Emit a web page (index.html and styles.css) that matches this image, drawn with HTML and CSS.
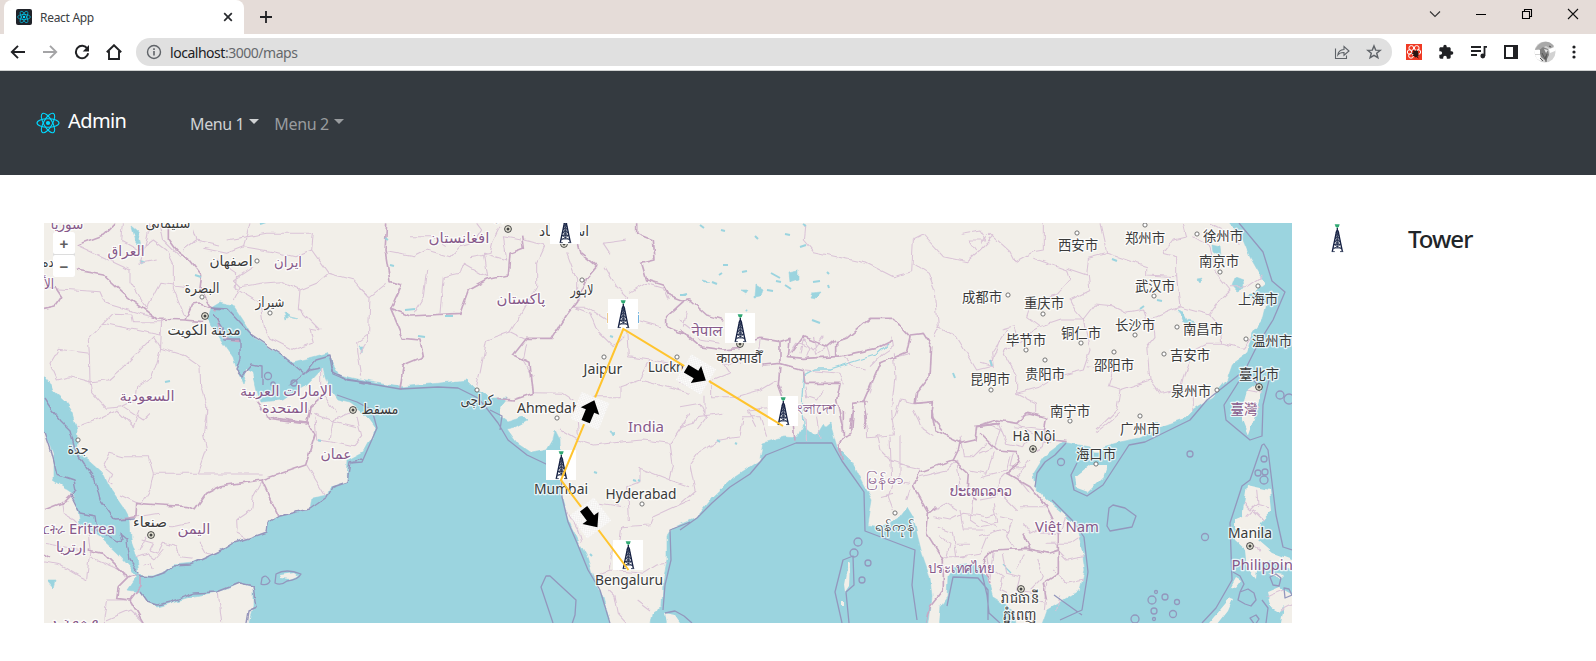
FILE: index.html
```html
<!DOCTYPE html>
<html lang="en">
<head>
<meta charset="utf-8">
<title>React App</title>
<link rel="stylesheet" href="styles.css">
</head>
<body>
<svg class="defs" width="0" height="0" aria-hidden="true">
  <defs>
    <symbol id="react" viewBox="-12 -11 24 22">
      <circle r="2.1" fill="#00d8ff"/>
      <g fill="none" stroke="#00d8ff" stroke-width="1.1">
        <ellipse rx="11" ry="4.3"/>
        <ellipse rx="11" ry="4.3" transform="rotate(60)"/>
        <ellipse rx="11" ry="4.3" transform="rotate(120)"/>
      </g>
    </symbol>
    <symbol id="tower" viewBox="0 0 30 30">
      <path d="M12.7 1.2h5l-.8 2.5-1.6 1.3-1.7-1.3z" fill="#31a873"/>
      <path d="M15.3 5v3M14.7 7.500 10.300 28.500M16 7.500 20.400 28.500" stroke="#141f42" stroke-width="1.300" fill="none"/>
      <path d="M14.200 9h2.300M13.600 12h3.500M13 15h4.700M12.400 18h5.900M11.800 21.500h7M11 25h8.600M14 9.500l3 3-3.800 3 4.700 3-5.600 3.200 7 4M16.800 9.500l-3 3 3.800 3-4.700 3 5.600 3.200-7 4M9.600 28.600h3.200M18 28.600h3.300M15.300 8v17" stroke="#1b2748" stroke-width=".8" fill="none"/>
    </symbol>
    <symbol id="marker" viewBox="0 0 30 30"><rect width="30" height="30" fill="#fff"/><use href="#tower" width="30" height="30"/></symbol>
    <pattern id="checks" width="3" height="3" patternUnits="userSpaceOnUse"><rect width="3" height="3" fill="#fff"/><path d="M0 0h1.500v1.500h-1.500zM1.500 1.500h1.500v1.500h-1.500z" fill="#eeecea"/></pattern>
    <g id="arrow"><rect x="-14.500" y="-15" width="29" height="30" fill="url(#checks)"/><path d="M-11.500-4.500H0V-10L11.500 0 0 10V4.500H-11.500z"/></g>
    <g id="town"><circle r="2.100" fill="#fff" stroke="#666" stroke-width=".9"/></g>
    <g id="capital"><circle r="3.400" fill="#e9e7d8" stroke="#444" stroke-width="1"/><circle r="1.500" fill="#444"/></g>
    <filter id="rough" filterUnits="userSpaceOnUse" x="30" y="210" width="1280" height="430" color-interpolation-filters="sRGB">
      <feTurbulence type="fractalNoise" baseFrequency=".12" numOctaves="1" seed="4"/>
      <feDisplacementMap in="SourceGraphic" scale="6" xChannelSelector="R" yChannelSelector="G"/>
    </filter>
  </defs>
</svg>

<header class="tabs">
  <div class="tab">
    <svg class="favicon" viewBox="0 0 16 16"><rect width="16" height="16" rx="2" fill="#20232a"/><use href="#react" x="1" y="1.500" width="14" height="13"/></svg>
    <span class="tab-title">React App</span>
    <svg width="10" height="10" viewBox="0 0 10 10"><path d="M1.200 1.200l7.600 7.600M8.800 1.200L1.200 8.800" stroke="#27292d" stroke-width="1.700"/></svg>
  </div>
  <svg class="plus" width="12" height="12" viewBox="0 0 12 12"><path d="M6 0v12M0 6h12" stroke="#202124" stroke-width="1.800"/></svg>
  <div class="window-buttons">
    <svg width="12" height="12" viewBox="0 0 12 12"><path d="M1 3.500l5 5 5-5" fill="none" stroke="#333" stroke-width="1.100"/></svg>
    <svg width="12" height="12" viewBox="0 0 12 12"><path d="M1 6.500h10" stroke="#000"/></svg>
    <svg width="12" height="12" viewBox="0 0 12 12"><path d="M1.500 3.500h7v7h-7zM3.500 3.500v-2h7v7h-2" fill="none" stroke="#000" stroke-width="1.100"/></svg>
    <svg width="12" height="12" viewBox="0 0 12 12"><path d="M1 1l10 10M11 1L1 11" stroke="#111" stroke-width="1.100"/></svg>
  </div>
</header>

<div class="toolbar">
  <svg width="16" height="16" viewBox="0 0 16 16"><path d="M15 8H2M8 1.800L1.800 8 8 14.200" fill="none" stroke="#202124" stroke-width="1.900"/></svg>
  <svg width="16" height="16" viewBox="0 0 16 16"><path d="M1 8h13M8 1.800L14.200 8 8 14.200" fill="none" stroke="#a4a4a6" stroke-width="1.900"/></svg>
  <svg width="16" height="16" viewBox="0 0 16 16"><path d="M13.300 4.600A6.200 6.200 0 1 0 14.200 9.300" fill="none" stroke="#202124" stroke-width="2"/><path d="M15 1v6.400H8.700z" fill="#202124"/></svg>
  <svg width="16" height="16" viewBox="0 0 16 16"><path d="M.8 8.200L8 1.200l7.200 7M3 7v8h10V7" fill="none" stroke="#202124" stroke-width="1.900"/></svg>
  <div class="address">
    <svg width="16" height="16" viewBox="0 0 16 16"><circle cx="8" cy="8" r="6.500" fill="none" stroke="#5f6368" stroke-width="1.400"/><path d="M8 7v4.500M8 4.200v1.700" stroke="#5f6368" stroke-width="1.600"/></svg>
    <span class="url"><b>localhost</b>:3000/maps</span>
    <svg width="16" height="16" viewBox="0 0 16 16"><path d="M1.500 4.500v10h11v-3M3.800 11c.4-3.700 2.700-5.300 6.200-5.500V2.500L15 7l-5 4.200V8.500c-3-.1-4.800.6-6.200 2.500z" fill="none" stroke="#5f6368" stroke-width="1.100"/></svg>
    <svg class="star" width="16" height="16" viewBox="0 0 16 16"><path d="M8 1.900l1.700 4.200 4.500.3-3.500 2.900 1.200 4.400L8 11.300l-3.900 2.400 1.200-4.400-3.500-2.900 4.500-.3z" fill="none" stroke="#5f6368" stroke-width="1.400"/></svg>
  </div>
  <div class="extensions">
    <svg width="16" height="16" viewBox="0 0 16 16"><path d="M0 0h16v16H0z" fill="#f03a24"/><g fill="none" stroke="#fff" stroke-width="1"><circle cx="5.300" cy="4" r="2.400"/><circle cx="10.700" cy="4" r="2.400"/><circle cx="3.500" cy="8" r="2.200"/><circle cx="12.500" cy="8" r="2.200"/><circle cx="5" cy="11.800" r="2.400"/></g><path d="M7 6l2 1 2-1 1.500 3.500-.5 3-2.500 1-2-2z" fill="#2b1512"/><path d="M5.500 9l7 2M7 12l5-5M11 13l1.500 1" stroke="#2b1512"/></svg>
    <svg width="16" height="16" viewBox="0 0 24 24"><path d="M20.500 11H19V7c0-1.100-.9-2-2-2h-4V3.500a2.500 2.500 0 0 0-5 0V5H4c-1.100 0-2 .9-2 2v3.800h1.500a2.700 2.700 0 0 1 0 5.400H2V20c0 1.100.9 2 2 2h3.800v-1.500a2.700 2.700 0 0 1 5.400 0V22H17c1.100 0 2-.9 2-2v-4h1.500a2.500 2.500 0 0 0 0-5z" fill="#202124"/></svg>
    <svg width="18" height="16" viewBox="0 0 18 16"><path d="M1 3h10M1 7h10M1 11h6" stroke="#202124" stroke-width="1.800"/><path d="M17 2.900h-2.500v9" fill="none" stroke="#202124" stroke-width="1.800"/><circle cx="12.800" cy="12" r="2.400" fill="#202124"/></svg>
    <svg width="14" height="14" viewBox="0 0 14 14"><path d="M1 1h12v12H1z" fill="#fff" stroke="#202124" stroke-width="2"/><path d="M9 0h5v14H9z" fill="#202124"/></svg>
    <svg width="22" height="22" viewBox="0 0 22 22"><circle cx="11" cy="11" r="10.500" fill="#d2d2d2"/><path d="M1 9C4 1 14-3 20 5l-3 3-5-3-6 3z" fill="#a8a8a8"/><path d="M5 9l4-3 5 2 1 6-3 6-5-4z" fill="#808080"/><path d="M0 9l6 0 0 4-5 0zM15 8l6-2v4l-5 2zM1 14h5l1 6-4-2z" fill="#fff"/><path d="M8 12l3 6 2-5M6 17l3 3M15 5l2 1M12 15v6" stroke="#555" fill="none"/><path d="M10 8l4 1-2 3z" fill="#e5e5e5"/></svg>
    <svg class="dots" width="4" height="14" viewBox="0 0 4 14"><g fill="#202124"><circle cx="2" cy="2" r="1.600"/><circle cx="2" cy="7" r="1.600"/><circle cx="2" cy="12" r="1.600"/></g></svg>
  </div>
</div>

<nav class="navbar">
  <a class="brand"><svg width="24" height="22"><use href="#react" width="24" height="22"/></svg><span>Admin</span></a>
  <a class="menu active">Menu 1<i class="caret"></i></a>
  <a class="menu">Menu 2<i class="caret"></i></a>
</nav>

<main class="content">
  <section class="map">
  <svg width="1248" height="400" viewBox="44 223 1248 400">
    <rect class="land" x="44" y="223" width="1248" height="400"/>
    <g filter="url(#rough)">
      <g class="water">
        <path d="M38 368L50 383 53 391 65 402 72 413 77 430 77 453 90 461 102 472 110 488 122 505 130 520 131 540 137 557 139 573 142 576 153 576 165 572 173 565 192 563 207 557 222 550 233 543 250 538 267 532 268 523 280 516 310 510 312 498 327 495 330 487 347 482 348 460 363 452 368 443 373 437 375 427 370 420 360 410 350 403 337 400 330 390 325 377 323 368 307 385 293 393 283 400 260 402 257 390 253 373 247 370 243 383 237 370 233 357 223 343 213 327 208 317 210 308 220 302 233 305 243 320 253 337 273 350 293 362 313 357 327 353 333 363 340 375 370 382 400 387 440 383 467 380 477 390 490 398 507 398 500 407 500 417 507 422 523 417 527 421 516 427 507 429 517 443 532 453 547 450 553 440 555 430 560 440 561 480 562 497 568 520 578 540 587 557 593 577 603 597 612 630H247L253 607 253 587 240 583 230 588 217 592 190 597 170 603 157 607 147 602 140 592 128 590 137 577 130 567 117 553 100 537 80 523 78 510 72 493 53 480 53 453 44 432 38 424z"/>
        <path d="M650 630L653 613 662 607 663 583 667 560 667 537 673 528 697 517 713 497 733 478 760 460 763 443 783 437 797 438 803 425 815 436 830 423 837 447 853 463 863 483 872 500 868 525 880 527 897 520 907 507 913 517 918 537 923 557 930 577 932 597 928 630z"/>
        <path d="M938 630L940 607 947 597 948 577 957 565 973 563 987 577 993 597 1013 610 1017 630z"/>
        <path d="M1040 630L1047 610 1080 590 1085 570 1082 550 1077 527 1063 513 1047 500 1035 487 1033 473 1043 457 1063 442 1090 447 1093 453 1100 453 1103 447 1120 442 1140 438 1160 428 1183 420 1193 410 1213 397 1227 380 1233 363 1247 353 1253 333 1263 320 1267 303 1247 298 1265 283 1250 257 1243 240 1223 216H1300V630z"/>
        <path d="M1235 277l8 3 1 8-7 3-5-6zM1212 245l8 2 1 9-8-5zM1177 310l6 2 4 8 8 2-10 1-4-8zM132 227l6 5 3 14-5-4zM140 260l5 2-4 2zM788 273l10-2 0 8-9 3zM812 293l9-1-5 6-6-1zM756 285l6 4-2 8-5 1zM702 280l8 2-5 1zM741 290l7 0-2 3zM818 432l5-8 8 12-3 5-8-2zM47 580l9 0-2 8zM610 431l5 1-3 3zM615 495l4 1zM290 317l8 2zM284 312l2 7 4-3zM1197 279l6-1-3 5zM359 347l4 0-1 5z"/>
        <path class="river" d="M804 425L802 395 804 375 815 369 830 369 862 359 875 355 888 344M1003 565l8 8M720 490l12-9M1150 425l8-4"/>
      </g>
      <g class="land">
        <path d="M1075 477L1090 465 1107 465 1103 477 1088 492 1077 488zM1257 383L1263 390 1258 407 1248 435 1242 420 1242 407 1247 390z"/>
        <path d="M1247 485L1270 490 1272 510 1260 523 1258 540 1273 553 1292 560 1292 568 1273 562 1258 560 1256 579 1248 570 1246 550 1235 540 1235 520 1242 517z"/>
        <path d="M1267 592l12-5 14 8v28h-12l3-17-6 6-7-4zM1204 629l16-19 10-12 3 1-5 12-15 19zM1236 578l5 3-5 7-5-1zM1268 572l16 3-5 5z"/>
        <path d="M665 613l10 2 7 10h-15zM280 575l14-2 4 3-7 3-10-1zM848 562l2 2-1 23-4 6-1-8zM841 601h3v4h-3zM246 369l7 4 2 13-7 0z"/>
      </g>

      <g class="minor">
        <g transform="translate(40 220) scale(.33333)">
          <path d="M12 205L70 208 180 215 195 250 350 295M190 310L220 280 275 282 280 305 365 305 360 345 190 310 145 360 148 400 55 388 30 430 52 480 90 470 150 485 155 515 200 565 250 560 310 600 330 580M148 400L150 485 205 480 250 440 340 350 362 385 365 300M362 385L430 405 480 440 482 500 500 560 500 630M362 385L350 430 335 470 290 500 285 540 245 560M110 75L185 110 270 150 270 185 320 265 360 190 440 200M250 10L245 60 300 90 340 60 380 90 400 130 400 205 435 290M360 10L370 60 420 110M460 30L470 60 430 90M490 85L560 100 610 80 630 10M560 60L680 40 820 40 815 90 765 110 700 95 610 80M815 90L865 160 830 190 780 210 720 185 665 190 600 200 580 180 640 140M585 205L660 250 670 320 690 355 760 390 820 370 810 325 840 330 775 265 780 210M865 160L940 180 985 230M990 340L950 370 965 470M600 200L580 240M470 60L540 75M330 10L320 60 300 130 350 120M530 120L590 160 585 210M845 445L845 510 890 580M820 580L870 600 950 620"/>
        </g>
        <g transform="translate(40 410) scale(.33333)">
          <path d="M110 50L180 25 230 0M230 0L280 50 300 0M500 0L490 75 500 120 475 190 340 190 325 140 250 140 210 130 190 170 215 190 205 215 220 225M340 190L330 240 305 280M240 255L305 285M665 192H475M665 215L640 260 635 300 590 330 592 370 620 385M800 165L855 255M870 90L880 30 930 10M825 20L830 90 870 95 940 110 965 80 950 20M12 455L60 465 120 500 140 510M65 275L70 310 105 330 145 370 150 420 140 505M150 440L240 480 255 500M12 400L130 420M190 638L200 570 265 570M200 630L270 600 310 638M535 550L545 638M290 320L360 310M305 390L340 400 330 420 355 430 370 400 410 410 420 440 460 445M320 345L400 350 450 340M290 440L320 430 345 450 370 420M300 420L320 380M480 395L500 430 525 435M340 480L330 460 310 465"/>
        </g>
        <g transform="translate(360 220) scale(.33333)">
          <path d="M0 205L30 230 80 190M30 230L25 360 0 400M80 95L160 110 200 90 270 110 300 80 340 70 365 30 350 10M200 150L190 230 160 280M240 280L250 170 300 160 310 130 380 170 370 100 440 120 430 50 480 60M490 60L555 75 530 130 530 200 485 280 450 335 380 360 360 460 350 500M330 110L390 100 400 60 420 20M150 50L220 50 260 80M450 335L500 360M620 100L650 180 650 240M640 260L690 280 710 330 760 380 790 350M640 262H680L740 300M735 140L770 200 800 230 780 280 830 300 900 320M810 220L860 190 910 205 925 240M800 330L805 410 870 420 840 480 780 500 780 530 700 530 690 560M520 518L610 520 640 540M870 420L990 440M840 480L990 520M750 100L730 70 800 60M500 370L490 420 520 470"/>
        </g>
        <g transform="translate(360 410) scale(.33333)">
          <path d="M650 90L700 105 790 95 850 90 930 100 990 10M930 100L940 170 930 210 840 175 840 215 800 230 805 330M720 280L790 290M785 350L870 345 880 320 990 270M930 210L990 230M785 350L780 390 760 420 750 480M700 500L750 480 850 490 890 465 920 460M745 540L765 560 775 610 800 638M620 300L655 360 665 395M650 0L655 80M600 60L650 90M830 570L870 600"/>
        </g>
        <g transform="translate(680 220) scale(.33333)">
          <path d="M375 10L370 60 400 95 560 130 640 170 695 155 700 60 730 45 790 110 860 125 900 90 940 50M700 130L745 160 765 210 775 320 760 350M775 320L830 350 890 450 930 440 960 360M845 40L900 30 920 60 870 60 890 90M0 490L60 500 70 470M0 300L40 330 60 360 120 370M20 270L10 320M100 480L150 460 130 430 180 430M95 480L95 530 170 530 240 510 290 480M230 620L205 570 290 560M0 560L60 550 80 590 50 630M75 530V590M330 400L350 370 390 385 380 410M400 350L410 400 440 380 450 410M360 400L370 360 400 390 430 350M375 450L480 460 490 490M375 500L380 530 410 540 430 510M580 480L570 520M640 400L645 470 635 560M240 360L230 430M690 400L650 410M490 410L520 440 560 450M710 550L660 540 640 600 645 630M570 440L610 400 640 380 635 350"/>
        </g>
        <g transform="translate(680 410) scale(.33333)">
          <path d="M0 50L40 40 50 20 130 10M0 280L45 240 30 165 55 130 120 90 180 80 190 20 240 20 260 80M380 100L375 20M420 90L410 20M555 0L560 80 640 75 635 0M590 75L600 120 630 150 690 170M630 80L635 210 690 220M660 75L660 210M700 0L730 60 760 80M680 170L720 180M840 80L850 140 880 140 920 100M720 200L800 180 830 150M760 320L810 330 850 310 920 320 960 310M760 300L800 280 830 300M830 150L840 230 870 260 920 250M870 180L920 190 940 130M880 260L870 330 900 350M770 350L820 370 830 440 900 430 920 380M790 440H860M830 400L870 400M640 210L625 260 640 300M600 260L640 250M690 240L680 270M780 380L810 400 800 440M920 440L930 500M840 300L850 360 910 360"/>
        </g>
        <g transform="translate(980 220) scale(.33333)">
          <path d="M0 70L30 40 90 95 105 125 160 95 190 90 190 10M160 115L260 150 270 180 230 225M260 145L320 165 325 115 380 100 360 10M380 100L500 140 500 165 590 170 590 110 550 100 580 60 620 50 610 10M325 165L330 210 270 240 285 270 310 300M590 170L600 260 530 290M310 300L345 255 400 260 440 280 490 270 500 300 530 290M600 260L690 285 725 235 750 210 710 160 690 80 640 50M690 285L720 320 725 370 790 385 815 350M725 370L680 370 640 390 610 470 600 510M520 300L525 350 500 380 510 480M310 300L240 300 180 320 140 290 150 260 230 225M310 300L330 390 310 450 230 470 180 500 110 520 110 470 70 400 80 385 120 370 160 330 180 320M80 330L35 400 40 440 0 430M320 440L400 450 385 500 420 510 510 480 540 520 600 510 640 500 640 570M420 510L410 570 370 610 345 630M110 520L170 550 170 580 120 590M750 200L800 200 850 165M800 510L850 520M795 580L840 560M690 10L750 40 780 70M65 330L100 320 115 360"/>
        </g>
        <g transform="translate(980 410) scale(.33333)">
          <path d="M345 70L370 50 420 10M0 130L45 110 60 60 20 40M50 30L80 100 130 110 150 90M100 50L200 60 190 110 150 130M110 40L170 80 210 100M0 200L80 180 90 140M0 270L50 260 60 210 80 190M60 250L110 300M120 290H200M40 280L50 340 0 350M60 320L100 330 80 380 100 410M130 340L150 370 190 350M180 370L240 370 260 320M200 400L270 400 300 380M230 420L260 450 310 440M220 480L260 520 310 510M170 450L190 500 150 540M30 470L70 500 60 540 120 570M70 430L80 490 120 500 110 540 170 550M130 430L110 480M40 420L30 510M200 520L190 600M140 560L190 580M0 330L50 350M0 380L60 360 90 370M150 150L110 200 150 250M240 560L230 600M790 280L810 300 830 280 870 290M800 320L820 300 850 330M830 240L835 290M800 400L840 420M100 130L90 170 140 170M860 560L910 540M900 600L940 580"/>
        </g>
      </g>

      <g class="country">
        <g transform="translate(40 220) scale(.33333)">
          <path d="M110 75L190 45 225 10M110 150L190 165 250 220 350 297 435 300 455 255 480 252 530 270M435 300L490 305M12 265L45 258 65 230 45 200M385 20V55L410 90 450 120 485 165 480 205 510 260M530 295L540 330 560 360 600 365M650 545L690 598 800 612 810 560 845 530"/>
        </g>
        <g transform="translate(40 410) scale(.33333)">
          <path d="M680 20L805 40 825 75 797 165 665 210 545 227 500 250 465 300 445 290 360 285 290 280 288 320 235 330M665 210L717 320M12 300L75 275 95 255M12 430L30 440M140 420L190 430 250 490 270 500 300 495M265 500L235 530 230 565 270 570 300 530 300 500M270 570L310 638"/>
        </g>
        <g transform="translate(360 220) scale(.33333)">
          <path d="M80 10L75 90 90 185 125 195 92 265 130 355 180 360 190 410 130 435 120 510M90 265L150 288 300 280 325 210 380 180 445 165 450 100 490 85 485 50M620 10L650 60 660 100 710 140 680 175 650 245 620 285 575 355 500 355 460 405 510 430 520 520 460 540 410 535M830 10L830 40 880 60 885 120 845 130 860 180 910 195 930 230 970 245 920 290 920 320 990 350M970 245L990 240"/>
        </g>
        <g transform="translate(680 220) scale(.33333)">
          <path d="M0 245L30 240 80 285 130 300M0 330L60 380 130 390 180 385M225 360L240 355 300 365 330 355 325 410 370 415 470 410 470 365 500 355 570 295 640 295 690 350 680 395 600 430 550 545 560 600 550 630M465 360L440 380 370 350 335 400M300 365L300 430 250 435M300 430L370 450 375 490 480 490 470 540 490 630M300 440L295 490 320 560 335 620M690 345L730 340 755 380 750 470 710 520 705 550 760 545 755 590 790 630M510 630L520 550 560 545M470 410L590 385 640 360M880 620L960 610"/>
        </g>
        <g transform="translate(680 410) scale(.33333)">
          <path d="M335 0L345 95M490 0L490 80 475 105 490 150M520 0L515 70 490 80M755 0L765 60 840 95 835 120 820 150 720 185 700 230 745 310 740 370 790 450 790 540 750 590 740 638M840 100L885 90 890 50 960 40M820 150L865 190 860 250 890 270M745 310L770 290"/>
        </g>
        <g transform="translate(980 410) scale(.33333)">
          <path d="M0 45L50 30 110 40 140 10 200 25 190 80 220 90 260 95M0 70L50 120 110 125 120 155 80 190 150 230 200 290 235 360 235 420 205 430 140 415 40 420 10 450 30 520M235 410L235 490 190 520 200 570M130 370L150 415"/>
        </g>
      </g>
      <g class="coast">
        <path d="M44 398L52 410 60 420 70 430 76 452 95 480 100 500 115 520 135 519M139 576L153 577 166 572 173 566 190 565 207 557 222 550 233 543 250 538 267 532 268 523 280 516 310 509 327 497 332 487 347 482 350 462 363 459M140 592L147 602 157 605 170 602 195 593 217 592 240 583 253 586 256 608 249 611 247 623M44 432L50 450 56 474 74 480 76 490 71 495 80 513 95 516 97 530 117 542 122 540 120 534 127 540 130 560 139 573"/>
        <path d="M210 308L228 309 252 335 282 355 305 374 316 360 330 356 333 372 347 379 370 384M213 314L222 328 224 340 240 340 240 358 236 370 242 377 252 365 262 367 262 385M290 385L310 370 320 368"/>
      </g>
    </g>

    <g class="sea-border">
      <path d="M360 382L400 389 438 387 458 388 478 398 488 410 498 423 508 440 527 455 546 464 561 467 562 497 568 522 577 543 588 570 600 590 612 630M490 410L502 416 500 430M330 358L333 374 347 380 370 383M337 395L357 402 372 410 377 428 362 462 350 463"/>
      <path d="M553 623L541 587 546 576 550 576 576 600 575 615 570 630M680 530L697 518 712 503 730 487 750 474 766 455 796 443 832 443 842 461 852 475 864 492 865 531 915 550 912 585 917 620M690 522L670 530 671 560 665 585 663 610M842 623L835 592 843 560 853 556 854 585 846 592 849 623M947 606L953 577 978 578 988 590 988 620M980 565L987 595 989 613 1000 623"/>
      <path d="M1052 500L1072 520 1084 537 1088 572 1082 610 1060 620M1054 595L1082 615M1239 223L1263 252 1272 281 1285 292 1273 320 1258 344 1245 370 1207 400 1190 420 1145 442 1129 445 1103 485 1087 496 1074 490 1071 475 1077 463M1248 367L1224 405 1226 420 1250 440 1262 436 1263 405 1269 380M1246 371L1257 384M1262 445L1264 444 1268 450 1276 515 1283 547 1292 550M1262 445L1250 480 1242 486 1230 523 1232 580 1216 608 1202 623M1109 508L1113 505 1125 508 1136 516 1132 527 1110 531 1107 526zM1035 487L1037 473 1045 462 1055 455 1066 443"/>
      <path d="M262 578q4-5 8 3-2 5-9 3zM276 574q10-6 25 0-3 6-14 7-6 5-12 2zM665 613l10-2 9 5 8 7"/>
      <circle cx="858" cy="542" r="4"/><circle cx="854" cy="553" r="4"/><circle cx="868" cy="563" r="3"/><circle cx="862" cy="580" r="3"/><circle cx="1061" cy="462" r="3.500"/><circle cx="1190" cy="454" r="3"/><circle cx="1205" cy="537" r="3.500"/><circle cx="1152" cy="600" r="4"/><circle cx="1165" cy="597" r="3"/><circle cx="1177" cy="602" r="2.500"/><circle cx="1173" cy="614" r="3.500"/><circle cx="1135" cy="619" r="4"/><circle cx="1154" cy="611" r="3"/><circle cx="1156" cy="592" r="1.500"/><circle cx="1154" cy="619" r="1.500"/><circle cx="1280" cy="395" r="4"/><circle cx="1289" cy="399" r="5"/><circle cx="1258" cy="473" r="3"/><circle cx="1264" cy="480" r="4"/><circle cx="1265" cy="472" r="3"/><circle cx="1264" cy="459" r="3"/><circle cx="268" cy="376" r="3.500"/><circle cx="294" cy="383" r="3"/><circle cx="273" cy="384" r="2"/>
      <path d="M1240 592l8-3 6 4 2 7-5 6-6-2-7-4zM1270 577l6-3 5 4-2 8-6-1zM1250 618l6-3 3 4-4 6zM1284 588l5 1 3 6-7 3zM1233 572l7 4 4 8-4 8M1262 600l6 8-2 15"/>
    </g>
    <path class="lake-dots" d="M700 225l4 3M721 230l4 1M755 236l3 3M785 234l5 1M803 224l3 2M800 247l6-2M723 265l5 0M712 282l5 2M719 275l3-2M742 272l5-1M771 273l9 5M785 285l6 4M776 281l5 1M813 282l7-1M827 272l2 2M767 290l6 1M828 285l1 3M746 310l1 1M680 295l6 0M812 320l8 3M165 382l5-1M385 238l3 2M390 265l4 1M405 310l10-1M445 316l8 0M418 336l7 1M683 295l4-1M260 224l6-2M195 275l6 2M990 360l2 6M953 373l2 5M1112 259l5 2M1140 309l4-3M1157 300l5 1M610 336l3 1M633 480l3 1M638 480l2 1M594 472l3 1M636 547l4 0M590 554l2 2M717 440l3 2M735 443l2 1M318 440l3 1"/>

    <g class="marks">
      <use href="#town" x="257" y="261"/><use href="#town" x="202" y="297"/><use href="#town" x="270" y="313"/><use href="#capital" x="205" y="316"/><use href="#capital" x="353" y="410"/><use href="#town" x="78" y="440"/><use href="#capital" x="151" y="535"/><use href="#capital" x="508" y="229"/><use href="#capital" x="564" y="244"/><use href="#town" x="582" y="280"/><use href="#town" x="604" y="357"/><use href="#town" x="677" y="357"/><use href="#town" x="477" y="390"/><use href="#town" x="557" y="418"/><use href="#town" x="642" y="504"/><use href="#capital" x="740" y="344"/><use href="#town" x="895" y="513"/><use href="#capital" x="1033" y="449"/><use href="#capital" x="1021" y="589"/><use href="#capital" x="1250" y="546"/><use href="#capital" x="1259" y="387"/>
      <use href="#town" x="1077" y="233"/><use href="#town" x="1145" y="225"/><use href="#town" x="1197" y="234"/><use href="#town" x="1220" y="272"/><use href="#town" x="1258" y="286"/><use href="#town" x="1154" y="296"/><use href="#town" x="1008" y="295"/><use href="#town" x="1043" y="314"/><use href="#town" x="1135" y="335"/><use href="#town" x="1177" y="327"/><use href="#town" x="1246" y="339"/><use href="#town" x="1081" y="343"/><use href="#town" x="1026" y="350"/><use href="#town" x="1045" y="360"/><use href="#town" x="1114" y="352"/><use href="#town" x="1164" y="354"/><use href="#town" x="1217" y="390"/><use href="#town" x="991" y="390"/><use href="#town" x="1070" y="421"/><use href="#town" x="1140" y="416"/><use href="#town" x="1096" y="464"/>
    </g>

    <g class="label nation">
      <text x="67" y="229" textLength="33">سوريا</text><text x="126" y="256" textLength="37">العراق</text><text x="288" y="267" textLength="28">ايران</text><text x="49" y="289" textLength="10">الأ</text><text x="147" y="401" textLength="55">السعودية</text><text x="286" y="396" textLength="92">الإمارات العربية</text><text x="285" y="413" textLength="46">المتحدة</text><text x="336" y="459" textLength="31">عمان</text><text x="194" y="534" textLength="33">اليمن</text><text x="71" y="552" textLength="30">إرتريا</text><text x="92" y="534" textLength="46">Eritrea</text><text x="50" y="534" textLength="31">ኤርትራ</text><text x="75" y="629" textLength="46">ኢትዮጵያ</text><text x="459" y="243" textLength="61">افغانستان</text><text x="521" y="304" textLength="49">پاکستان</text><text x="646" y="432" textLength="36">India</text><text x="707" y="336" textLength="31">नेपाल</text><text x="811" y="414" textLength="50">বাংলাদেশ</text><text x="885" y="484" textLength="38">မြန်မာ</text><text x="981" y="496" textLength="62">ປະເທດລາວ</text><text x="961" y="573" textLength="66">ประเทศไทย</text><text x="1067" y="532" textLength="64">Việt Nam</text><text x="1270" y="570" textLength="77">Philippines</text><text x="1244" y="414" textLength="27">臺灣</text>
    </g>
    <g class="label city">
      <text x="168" y="228" textLength="45">سليمانى</text><text x="231" y="266" textLength="43">اصفهان</text><text x="202" y="293" textLength="35">البصرة</text><text x="270" y="307" textLength="29">شیراز</text><text x="204" y="335" textLength="73">مدينة الكويت</text><text x="48" y="267" textLength="11">ده</text><text x="380" y="414" textLength="37">مسقط</text><text x="78" y="454" textLength="21">جدة</text><text x="150" y="527" textLength="34">صنعاء</text><text x="503" y="221" textLength="20">کابل</text><text x="564" y="236" textLength="50">اسلام‌آباد</text><text x="582" y="295" textLength="23">لاہور</text><text x="477" y="405" textLength="33">کراچی</text>
      <text x="603" y="374" textLength="39">Jaipur</text><text x="675" y="372" textLength="54">Lucknow</text><text x="557" y="413" textLength="80">Ahmedabad</text><text x="623" y="323" textLength="33">Delhi</text><text x="561" y="494" textLength="54">Mumbai</text><text x="641" y="499" textLength="71">Hyderabad</text><text x="629" y="585" textLength="68">Bengaluru</text><text x="739" y="363" textLength="45">काठमाडौँ</text><text x="895" y="531" textLength="41">ရန်ကုန်</text><text x="1034" y="441" textLength="43">Hà Nội</text><text x="1250" y="538" textLength="44">Manila</text><text x="1020" y="603" textLength="38">រាជធានី</text><text x="1020" y="620" textLength="34">ភ្នំពេញ</text>
    </g>
    <g class="label city cjk">
      <text x="1078" y="250">西安市</text><text x="1145" y="243">郑州市</text><text x="1223" y="241">徐州市</text><text x="1219" y="266">南京市</text><text x="1258" y="304">上海市</text><text x="1155" y="291">武汉市</text><text x="982" y="302">成都市</text><text x="1044" y="308">重庆市</text><text x="1135" y="330">长沙市</text><text x="1203" y="334">南昌市</text><text x="1272" y="346">温州市</text><text x="1081" y="338">铜仁市</text><text x="1026" y="345">毕节市</text><text x="1045" y="379">贵阳市</text><text x="1114" y="370">邵阳市</text><text x="1190" y="360">吉安市</text><text x="1259" y="379">臺北市</text><text x="1191" y="396">泉州市</text><text x="990" y="384">昆明市</text><text x="1070" y="416">南宁市</text><text x="1140" y="434">广州市</text><text x="1096" y="459">海口市</text>
    </g>

    <use href="#marker" x="550" y="214" width="30" height="30"/>
    <use href="#marker" x="608" y="299" width="30" height="30"/>
    <use href="#marker" x="725" y="313" width="30" height="30"/>
    <use href="#marker" x="768" y="396" width="30" height="30"/>
    <use href="#marker" x="546" y="450" width="30" height="30"/>
    <use href="#marker" x="613" y="540" width="30" height="30"/>
    <path class="route" d="M783 426L623.300 329 561 480 628.500 570"/>
    <use href="#arrow" transform="translate(590 411) rotate(-67.700)"/>
    <use href="#arrow" transform="translate(696 374.500) rotate(31.200)"/>
    <use href="#arrow" transform="translate(590.500 518) rotate(53.100)"/>
  </svg>
    <div class="zoom"><button>+</button><button>−</button></div>
  </section>
  <aside class="legend">
    <svg width="30" height="30"><use href="#tower" width="30" height="30"/></svg>
    <span>Tower</span>
  </aside>
</main>
<script src="labels.js"></script>
</body>
</html>
```
FILE: styles.css
```css
* { box-sizing: border-box; }
body { margin: 0; background: #fff; font-family: "Noto Sans", "Open Sans", sans-serif; overflow: hidden; }
svg { display: block; flex: none; }
.defs { position: absolute; }

.tabs { height: 34px; background: #e5dcd8; display: flex; align-items: center; padding-left: 4px; }
.tab { width: 240px; height: 34px; background: #fff; border-radius: 8px 8px 0 0; display: flex; align-items: center; padding: 0 11px 0 12px; }
.favicon { width: 16px; height: 16px; }
.tab-title { flex: 1; margin-left: 8px; font-size: 12px; letter-spacing: -.3px; color: #3c4043; }
.plus { margin-left: 16px; }
.window-buttons { margin-left: auto; display: flex; gap: 34px; padding: 0 17px 6px 0; }

.toolbar { height: 37px; border-bottom: 1px solid #cfd1d1; display: flex; align-items: center; padding: 0 20px 0 10px; gap: 16px; }
.address { flex: 1; height: 28px; border-radius: 14px; background: #e0e0e0; display: flex; align-items: center; padding: 0 10px; margin-left: -2px; }
.url { flex: 1; margin-left: 8px; font-size: 14px; letter-spacing: -.47px; color: #65686c; }
.url b { font-weight: 400; color: #202124; }
.star { margin-left: 16px; }
.extensions { display: flex; align-items: center; margin-left: -2px; width: 170px; justify-content: space-between; }

.navbar { height: 104px; background: #343a40; display: flex; align-items: center; padding-left: 36px; }
.brand { display: flex; align-items: center; color: #fff; font-size: 20px; letter-spacing: -.6px; width: 154px; }
.brand span { margin: -5px 0 0 8px; }
.menu { color: #999c9f; font-size: 16px; letter-spacing: -.38px; display: flex; align-items: center; margin: 1px 15px 0 0; }
.menu.active { color: #d0d2d4; }
.caret { border: 5px solid transparent; border-top-color: currentColor; border-bottom: 0; margin: -4px 0 0 5px; }

.content { display: flex; padding: 48px 0 0 44px; }
.map { position: relative; width: 1248px; height: 400px; overflow: hidden; }
.zoom { position: absolute; left: 9px; top: 9px; display: grid; gap: 1px; background: #ddd; border-radius: 2px; }
.zoom button { width: 22px; height: 22px; border: 0; padding: 2px 0 0; background: #fff; border-radius: 2px; color: #606060; font: bold 15px/20px "Liberation Sans", sans-serif; }
.legend { display: flex; align-items: flex-start; padding-left: 30px; color: #212529; font-size: 24px; font-weight: 500; line-height: 31px; }
.legend span { margin-left: 56px; letter-spacing: -1px; }

.land { fill: #f2efe9; }
.water { fill: #9bd4df; stroke: #9bd4df; stroke-width: .6; }
.water .river { fill: none; stroke-width: 1.3; }
.minor { fill: none; stroke: #dac3d7; stroke-width: 3.2; stroke-linejoin: round; }
.country { fill: none; stroke: #c7a7c3; stroke-width: 5; stroke-linejoin: round; }
.coast { fill: none; stroke: #9695bb; stroke-width: 1.4; stroke-linejoin: round; }
.sea-border { fill: none; stroke: #9397bd; stroke-width: 1.3; stroke-linejoin: round; }
.lake-dots { fill: none; stroke: #9bd4df; stroke-width: 2; }
.label { font: 14.2px "Noto Sans", "Noto Sans CJK SC", "DejaVu Sans", sans-serif; text-anchor: middle; paint-order: stroke; stroke: rgba(255, 255, 255, .75); stroke-width: 2.6; stroke-linejoin: round; }
.cjk { font-size: 13.4px; }
.nation { fill: #87598a; }
.city { fill: #3a3a3a; }
.route { fill: none; stroke: #ffc42e; stroke-width: 2; }
```
FILE: labels.js
```js
// Scale whole words so that joined scripts keep their ligatures
document.querySelectorAll('.label text[textLength]').forEach(function (label) {
  label.setAttribute('lengthAdjust', 'spacingAndGlyphs');
});
```
